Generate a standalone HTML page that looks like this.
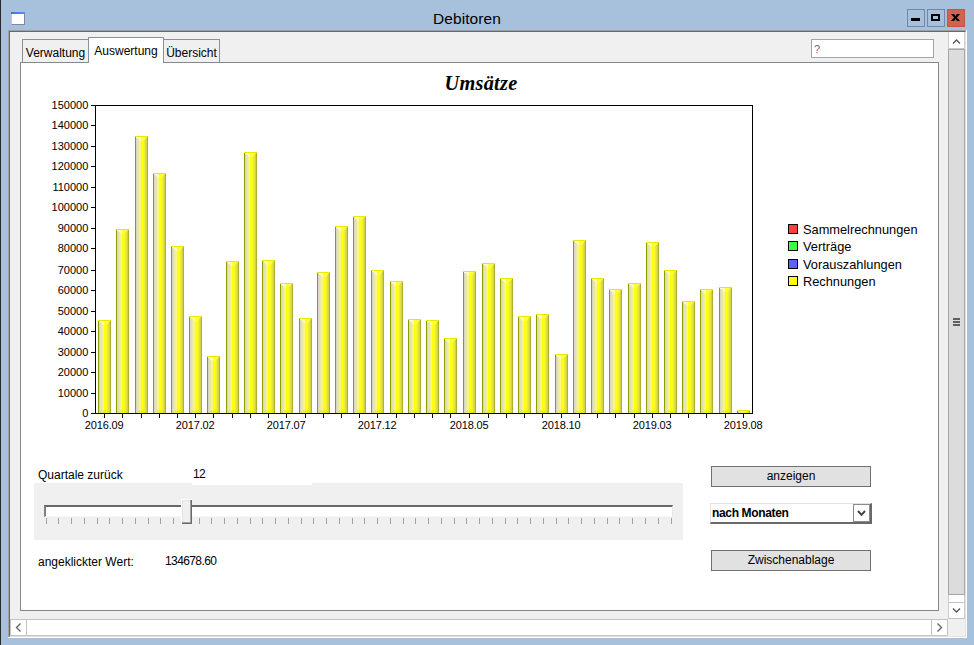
<!DOCTYPE html>
<html lang="de"><head><meta charset="utf-8"><title>Debitoren</title>
<style>
html,body{margin:0;padding:0}
body{width:974px;height:645px;overflow:hidden;background:#a7c1dc;position:relative;font-family:"Liberation Sans",Arial,sans-serif;font-size:12px;color:#000}
.abs{position:absolute;box-sizing:border-box}
#edge{left:0;top:0;width:1px;height:645px;background:#2b2927}
#edge2{left:1px;top:0;width:1px;height:645px;background:#adc9e6}
#icon{left:11px;top:12px;width:14px;height:13px;background:#fffffa;border:1px solid #8484a8;border-left-color:#c8c0e2;border-top:none}
#icon i{position:absolute;left:-1px;top:0;width:14px;height:2px;background:linear-gradient(90deg,#3f6edb,#5a92ea)}
#title{left:367px;top:9px;width:200px;text-align:center;font-size:15.5px;letter-spacing:0.1px;line-height:20px;color:#000}
.wbtn{top:9px;width:18px;height:18px;border:1px solid #7386a3}
#bmin{left:907px}#bmax{left:927px}#bclose{left:947px;background:#d06450;border-color:#c4553f}
#client{left:8px;top:30px;width:959px;height:608px;background:#a0a0a0}
#client2{left:9px;top:31px;width:957px;height:606px;background:#f0f0f0;border-left:1px solid #696969;border-top:1px solid #696969;border-right:1px solid #e3e3e3;border-bottom:1px solid #e3e3e3}
#client3{left:10px;top:32px;width:955px;height:604px;border-left:1px solid #f8f8f8;border-top:1px solid #f8f8f8}
#clientr{left:966px;top:30px;width:1px;height:608px;background:#fff}
#clientb{left:8px;top:637px;width:959px;height:1px;background:#fff}
.tab{border:1px solid #8a8f9c;border-bottom:none;background:#f0f0f0;font-size:12px;text-align:center;white-space:nowrap}
#t1{left:22px;top:39px;width:67px;height:23px;line-height:27px}
#t3{left:163px;top:39px;width:57px;height:23px;line-height:27px}
#t2{left:88px;top:37px;width:76px;height:26px;background:#fff;line-height:26px;z-index:3}
#panel{left:20px;top:62px;width:919px;height:549px;background:#fff;border:1px solid #828790}
#q{left:811px;top:39px;width:123px;height:19px;background:#fff;border:1px solid #a2a4ac;color:#6d6d6d;font-size:11px;line-height:18px;padding-left:2px}
#vs{left:948px;top:32px;width:17px;height:587px;background:#fff}
#vth{left:948px;top:49px;width:17px;height:546px;background:#dcdcdc;border:1px solid #a6a6a6}
#hs{left:10px;top:619px;width:938px;height:17px;background:#fff;border:1px solid #c3c3c3}
.lbl{font-size:12px;white-space:nowrap;line-height:14px}
#sl{left:34px;top:483px;width:649px;height:57px;background:#f0f0f0}
#lbl12bg{left:192px;top:465px;width:120px;height:20px;background:#fff}
#track{left:44px;top:505px;width:629px;height:12px;background:#fff;border-left:2px solid #808080;border-top:2px solid #696969;border-right:1px solid #e8e8e8;border-bottom:1px solid #f4f4f4}
#thumb{left:181px;top:499px;width:11px;height:25px;background:#696969;border-left:1px solid #fff;border-top:1px solid #fff}
#thumb i{position:absolute;left:0;top:0;width:9px;height:23px;background:#a0a0a0}
#thumb b{position:absolute;left:0;top:0;width:8px;height:22px;background:#f0f0f0;border-left:1px solid #e3e3e3;border-top:1px solid #e3e3e3;box-sizing:border-box}
.btn{background:#e1e1e1;border:1px solid #707070;font-size:12px;text-align:center;line-height:18px}
#combo{left:710px;top:503px;width:162px;height:21px;background:#fff;border-left:1px solid #e3e3e3;border-top:1px solid #e3e3e3;border-right:2px solid #696969;border-bottom:2px solid #696969;font-size:12px;font-weight:bold;letter-spacing:-0.35px;line-height:18px;padding-left:1px}
#cbtn{left:853px;top:504px;width:17px;height:18px;background:#fff;border:1px solid #8a8a8a}
</style></head><body>
<div class="abs" id="edge"></div>
<div class="abs" id="icon"><i></i></div>
<div class="abs" id="title">Debitoren</div>
<div class="abs wbtn" id="bmin"><svg width="16" height="16" style="position:absolute;left:0;top:0"><rect x="3" y="8" width="9" height="3" fill="#000"/></svg></div>
<div class="abs wbtn" id="bmax"><svg width="16" height="16" style="position:absolute;left:0;top:0"><rect x="4" y="5" width="7" height="5" fill="none" stroke="#000" stroke-width="2"/></svg></div>
<div class="abs wbtn" id="bclose"><svg width="16" height="16" style="position:absolute;left:0;top:0"><path d="M3 4h3l1.5 2.1L9 4h3L8.9 7.5 12 11H9L7.5 8.9 6 11H3L6.1 7.5Z" fill="#000"/></svg></div>
<div class="abs" id="client"></div><div class="abs" id="client2"></div><div class="abs" id="clientr"></div><div class="abs" id="clientb"></div>
<div class="abs" id="panel"></div>
<div class="abs tab" id="t1">Verwaltung</div>
<div class="abs tab" id="t3">Übersicht</div>
<div class="abs tab" id="t2">Auswertung</div>
<div class="abs" id="q">?</div>
<div class="abs" id="vs"></div>
<div class="abs" id="vth"></div>
<svg class="abs" style="left:948px;top:32px" width="17" height="587" shape-rendering="crispEdges"><rect x="0" y="0" width="1" height="17" fill="#d0d0d0"/><rect x="16" y="0" width="1" height="17" fill="#d0d0d0"/><rect x="0" y="16" width="17" height="1" fill="#c8c8c8"/><path d="M5 11.5L8.5 8L12 11.5" stroke="#555" stroke-width="1.3" fill="none" shape-rendering="auto"/><path d="M5 576.5L8.5 580L12 576.5" stroke="#555" stroke-width="1.3" fill="none" shape-rendering="auto"/><rect x="5" y="286" width="7" height="2" fill="#606060"/><rect x="5" y="289" width="7" height="2" fill="#606060"/><rect x="5" y="292" width="7" height="2" fill="#606060"/><rect x="0" y="563" width="1" height="24" fill="#cdcdcd"/><rect x="16" y="563" width="1" height="24" fill="#cdcdcd"/><rect x="0" y="570" width="17" height="1" fill="#c3c3c3"/><rect x="0" y="586" width="17" height="1" fill="#c3c3c3"/></svg>
<div class="abs" id="hs"></div>
<svg class="abs" style="left:10px;top:619px" width="938" height="17"><rect x="16" y="0" width="1" height="17" fill="#c3c3c3"/><rect x="921" y="0" width="1" height="17" fill="#c3c3c3"/><path d="M10.5 4.5L6.5 8.5L10.5 12.5" stroke="#606060" stroke-width="1.3" fill="none"/><path d="M927.5 4.5L931.5 8.5L927.5 12.5" stroke="#606060" stroke-width="1.3" fill="none"/></svg>
<div class="abs" id="sl"></div>
<div class="abs" id="lbl12bg"></div>
<div class="abs" id="track"></div>
<svg class="abs" style="left:0;top:0" width="974" height="645"><g shape-rendering="crispEdges" fill="#a0a0a0"><rect x="46" y="518" width="1" height="6"/><rect x="58" y="518" width="1" height="6"/><rect x="71" y="518" width="1" height="6"/><rect x="84" y="518" width="1" height="6"/><rect x="97" y="518" width="1" height="6"/><rect x="109" y="518" width="1" height="6"/><rect x="122" y="518" width="1" height="6"/><rect x="135" y="518" width="1" height="6"/><rect x="148" y="518" width="1" height="6"/><rect x="160" y="518" width="1" height="6"/><rect x="173" y="518" width="1" height="6"/><rect x="186" y="518" width="1" height="6"/><rect x="199" y="518" width="1" height="6"/><rect x="211" y="518" width="1" height="6"/><rect x="224" y="518" width="1" height="6"/><rect x="237" y="518" width="1" height="6"/><rect x="250" y="518" width="1" height="6"/><rect x="262" y="518" width="1" height="6"/><rect x="275" y="518" width="1" height="6"/><rect x="288" y="518" width="1" height="6"/><rect x="301" y="518" width="1" height="6"/><rect x="313" y="518" width="1" height="6"/><rect x="326" y="518" width="1" height="6"/><rect x="339" y="518" width="1" height="6"/><rect x="352" y="518" width="1" height="6"/><rect x="364" y="518" width="1" height="6"/><rect x="377" y="518" width="1" height="6"/><rect x="390" y="518" width="1" height="6"/><rect x="403" y="518" width="1" height="6"/><rect x="415" y="518" width="1" height="6"/><rect x="428" y="518" width="1" height="6"/><rect x="441" y="518" width="1" height="6"/><rect x="454" y="518" width="1" height="6"/><rect x="466" y="518" width="1" height="6"/><rect x="479" y="518" width="1" height="6"/><rect x="492" y="518" width="1" height="6"/><rect x="505" y="518" width="1" height="6"/><rect x="517" y="518" width="1" height="6"/><rect x="530" y="518" width="1" height="6"/><rect x="543" y="518" width="1" height="6"/><rect x="556" y="518" width="1" height="6"/><rect x="568" y="518" width="1" height="6"/><rect x="581" y="518" width="1" height="6"/><rect x="594" y="518" width="1" height="6"/><rect x="607" y="518" width="1" height="6"/><rect x="619" y="518" width="1" height="6"/><rect x="632" y="518" width="1" height="6"/><rect x="645" y="518" width="1" height="6"/><rect x="658" y="518" width="1" height="6"/><rect x="671" y="518" width="1" height="6"/></g></svg>
<div class="abs" id="thumb"><i></i><b></b></div>
<div class="abs lbl" style="left:38px;top:468px">Quartale zurück</div>
<div class="abs lbl" style="left:193px;top:467px;letter-spacing:-0.7px">12</div>
<div class="abs lbl" style="left:38px;top:555px">angeklickter Wert:</div>
<div class="abs lbl" style="left:165px;top:554px;letter-spacing:-0.6px">134678.60</div>
<div class="abs btn" style="left:711px;top:466px;width:160px;height:21px">anzeigen</div>
<div class="abs btn" style="left:711px;top:550px;width:160px;height:21px">Zwischenablage</div>
<div class="abs" id="combo">nach Monaten</div>
<div class="abs" id="cbtn"><svg width="15" height="16" style="position:absolute;left:0;top:0"><path d="M4 6L7.5 9.8L11 6" stroke="#404040" stroke-width="1.9" fill="none"/></svg></div>
<svg id="chart" width="974" height="645" viewBox="0 0 974 645" style="position:absolute;left:0;top:0">
<defs>
<linearGradient id="cyl" x1="0" y1="0" x2="1" y2="0">
<stop offset="0" stop-color="#989800"/><stop offset="0.077" stop-color="#989800"/>
<stop offset="0.077" stop-color="#d4d4c8"/><stop offset="0.2" stop-color="#e2e2b2"/><stop offset="0.33" stop-color="#f0f09a"/>
<stop offset="0.45" stop-color="#fafa84"/><stop offset="0.46" stop-color="#ffff00"/>
<stop offset="0.62" stop-color="#ffff14"/><stop offset="0.77" stop-color="#e8e83c"/>
<stop offset="0.923" stop-color="#cccc48"/><stop offset="0.923" stop-color="#b0b034"/>
<stop offset="1" stop-color="#b0b034"/>
</linearGradient>
</defs>
<g shape-rendering="crispEdges">
<rect x="98" y="320" width="13" height="93" fill="url(#cyl)"/>
<rect x="98" y="320" width="13" height="1" fill="#e8e800"/>
<path d="M99 321h5v4.5z" fill="#ffffa8" shape-rendering="auto"/>
<path d="M99 321h2.5l-2.5 0z M99 321h3l-1.5 1.2z" fill="#ffffff" shape-rendering="auto"/>
<path d="M104 321h6l-4 4h-2z" fill="#ffff38" shape-rendering="auto"/>
<path d="M99 413h11l-3-3h-5z" fill="#d8d800" fill-opacity="0.3" shape-rendering="auto"/>
<rect x="116" y="229" width="13" height="184" fill="url(#cyl)"/>
<rect x="116" y="229" width="13" height="1" fill="#e8e800"/>
<path d="M117 230h5v4.5z" fill="#ffffa8" shape-rendering="auto"/>
<path d="M117 230h2.5l-2.5 0z M117 230h3l-1.5 1.2z" fill="#ffffff" shape-rendering="auto"/>
<path d="M122 230h6l-4 4h-2z" fill="#ffff38" shape-rendering="auto"/>
<path d="M117 413h11l-3-3h-5z" fill="#d8d800" fill-opacity="0.3" shape-rendering="auto"/>
<rect x="135" y="136" width="13" height="277" fill="url(#cyl)"/>
<rect x="135" y="136" width="13" height="1" fill="#e8e800"/>
<path d="M136 137h5v4.5z" fill="#ffffa8" shape-rendering="auto"/>
<path d="M136 137h2.5l-2.5 0z M136 137h3l-1.5 1.2z" fill="#ffffff" shape-rendering="auto"/>
<path d="M141 137h6l-4 4h-2z" fill="#ffff38" shape-rendering="auto"/>
<path d="M136 413h11l-3-3h-5z" fill="#d8d800" fill-opacity="0.3" shape-rendering="auto"/>
<rect x="153" y="173" width="13" height="240" fill="url(#cyl)"/>
<rect x="153" y="173" width="13" height="1" fill="#e8e800"/>
<path d="M154 174h5v4.5z" fill="#ffffa8" shape-rendering="auto"/>
<path d="M154 174h2.5l-2.5 0z M154 174h3l-1.5 1.2z" fill="#ffffff" shape-rendering="auto"/>
<path d="M159 174h6l-4 4h-2z" fill="#ffff38" shape-rendering="auto"/>
<path d="M154 413h11l-3-3h-5z" fill="#d8d800" fill-opacity="0.3" shape-rendering="auto"/>
<rect x="171" y="246" width="13" height="167" fill="url(#cyl)"/>
<rect x="171" y="246" width="13" height="1" fill="#e8e800"/>
<path d="M172 247h5v4.5z" fill="#ffffa8" shape-rendering="auto"/>
<path d="M172 247h2.5l-2.5 0z M172 247h3l-1.5 1.2z" fill="#ffffff" shape-rendering="auto"/>
<path d="M177 247h6l-4 4h-2z" fill="#ffff38" shape-rendering="auto"/>
<path d="M172 413h11l-3-3h-5z" fill="#d8d800" fill-opacity="0.3" shape-rendering="auto"/>
<rect x="189" y="316" width="13" height="97" fill="url(#cyl)"/>
<rect x="189" y="316" width="13" height="1" fill="#e8e800"/>
<path d="M190 317h5v4.5z" fill="#ffffa8" shape-rendering="auto"/>
<path d="M190 317h2.5l-2.5 0z M190 317h3l-1.5 1.2z" fill="#ffffff" shape-rendering="auto"/>
<path d="M195 317h6l-4 4h-2z" fill="#ffff38" shape-rendering="auto"/>
<path d="M190 413h11l-3-3h-5z" fill="#d8d800" fill-opacity="0.3" shape-rendering="auto"/>
<rect x="207" y="356" width="13" height="57" fill="url(#cyl)"/>
<rect x="207" y="356" width="13" height="1" fill="#e8e800"/>
<path d="M208 357h5v4.5z" fill="#ffffa8" shape-rendering="auto"/>
<path d="M208 357h2.5l-2.5 0z M208 357h3l-1.5 1.2z" fill="#ffffff" shape-rendering="auto"/>
<path d="M213 357h6l-4 4h-2z" fill="#ffff38" shape-rendering="auto"/>
<path d="M208 413h11l-3-3h-5z" fill="#d8d800" fill-opacity="0.3" shape-rendering="auto"/>
<rect x="226" y="261" width="13" height="152" fill="url(#cyl)"/>
<rect x="226" y="261" width="13" height="1" fill="#e8e800"/>
<path d="M227 262h5v4.5z" fill="#ffffa8" shape-rendering="auto"/>
<path d="M227 262h2.5l-2.5 0z M227 262h3l-1.5 1.2z" fill="#ffffff" shape-rendering="auto"/>
<path d="M232 262h6l-4 4h-2z" fill="#ffff38" shape-rendering="auto"/>
<path d="M227 413h11l-3-3h-5z" fill="#d8d800" fill-opacity="0.3" shape-rendering="auto"/>
<rect x="244" y="152" width="13" height="261" fill="url(#cyl)"/>
<rect x="244" y="152" width="13" height="1" fill="#e8e800"/>
<path d="M245 153h5v4.5z" fill="#ffffa8" shape-rendering="auto"/>
<path d="M245 153h2.5l-2.5 0z M245 153h3l-1.5 1.2z" fill="#ffffff" shape-rendering="auto"/>
<path d="M250 153h6l-4 4h-2z" fill="#ffff38" shape-rendering="auto"/>
<path d="M245 413h11l-3-3h-5z" fill="#d8d800" fill-opacity="0.3" shape-rendering="auto"/>
<rect x="262" y="260" width="13" height="153" fill="url(#cyl)"/>
<rect x="262" y="260" width="13" height="1" fill="#e8e800"/>
<path d="M263 261h5v4.5z" fill="#ffffa8" shape-rendering="auto"/>
<path d="M263 261h2.5l-2.5 0z M263 261h3l-1.5 1.2z" fill="#ffffff" shape-rendering="auto"/>
<path d="M268 261h6l-4 4h-2z" fill="#ffff38" shape-rendering="auto"/>
<path d="M263 413h11l-3-3h-5z" fill="#d8d800" fill-opacity="0.3" shape-rendering="auto"/>
<rect x="280" y="283" width="13" height="130" fill="url(#cyl)"/>
<rect x="280" y="283" width="13" height="1" fill="#e8e800"/>
<path d="M281 284h5v4.5z" fill="#ffffa8" shape-rendering="auto"/>
<path d="M281 284h2.5l-2.5 0z M281 284h3l-1.5 1.2z" fill="#ffffff" shape-rendering="auto"/>
<path d="M286 284h6l-4 4h-2z" fill="#ffff38" shape-rendering="auto"/>
<path d="M281 413h11l-3-3h-5z" fill="#d8d800" fill-opacity="0.3" shape-rendering="auto"/>
<rect x="299" y="318" width="13" height="95" fill="url(#cyl)"/>
<rect x="299" y="318" width="13" height="1" fill="#e8e800"/>
<path d="M300 319h5v4.5z" fill="#ffffa8" shape-rendering="auto"/>
<path d="M300 319h2.5l-2.5 0z M300 319h3l-1.5 1.2z" fill="#ffffff" shape-rendering="auto"/>
<path d="M305 319h6l-4 4h-2z" fill="#ffff38" shape-rendering="auto"/>
<path d="M300 413h11l-3-3h-5z" fill="#d8d800" fill-opacity="0.3" shape-rendering="auto"/>
<rect x="317" y="272" width="13" height="141" fill="url(#cyl)"/>
<rect x="317" y="272" width="13" height="1" fill="#e8e800"/>
<path d="M318 273h5v4.5z" fill="#ffffa8" shape-rendering="auto"/>
<path d="M318 273h2.5l-2.5 0z M318 273h3l-1.5 1.2z" fill="#ffffff" shape-rendering="auto"/>
<path d="M323 273h6l-4 4h-2z" fill="#ffff38" shape-rendering="auto"/>
<path d="M318 413h11l-3-3h-5z" fill="#d8d800" fill-opacity="0.3" shape-rendering="auto"/>
<rect x="335" y="226" width="13" height="187" fill="url(#cyl)"/>
<rect x="335" y="226" width="13" height="1" fill="#e8e800"/>
<path d="M336 227h5v4.5z" fill="#ffffa8" shape-rendering="auto"/>
<path d="M336 227h2.5l-2.5 0z M336 227h3l-1.5 1.2z" fill="#ffffff" shape-rendering="auto"/>
<path d="M341 227h6l-4 4h-2z" fill="#ffff38" shape-rendering="auto"/>
<path d="M336 413h11l-3-3h-5z" fill="#d8d800" fill-opacity="0.3" shape-rendering="auto"/>
<rect x="353" y="216" width="13" height="197" fill="url(#cyl)"/>
<rect x="353" y="216" width="13" height="1" fill="#e8e800"/>
<path d="M354 217h5v4.5z" fill="#ffffa8" shape-rendering="auto"/>
<path d="M354 217h2.5l-2.5 0z M354 217h3l-1.5 1.2z" fill="#ffffff" shape-rendering="auto"/>
<path d="M359 217h6l-4 4h-2z" fill="#ffff38" shape-rendering="auto"/>
<path d="M354 413h11l-3-3h-5z" fill="#d8d800" fill-opacity="0.3" shape-rendering="auto"/>
<rect x="371" y="270" width="13" height="143" fill="url(#cyl)"/>
<rect x="371" y="270" width="13" height="1" fill="#e8e800"/>
<path d="M372 271h5v4.5z" fill="#ffffa8" shape-rendering="auto"/>
<path d="M372 271h2.5l-2.5 0z M372 271h3l-1.5 1.2z" fill="#ffffff" shape-rendering="auto"/>
<path d="M377 271h6l-4 4h-2z" fill="#ffff38" shape-rendering="auto"/>
<path d="M372 413h11l-3-3h-5z" fill="#d8d800" fill-opacity="0.3" shape-rendering="auto"/>
<rect x="390" y="281" width="13" height="132" fill="url(#cyl)"/>
<rect x="390" y="281" width="13" height="1" fill="#e8e800"/>
<path d="M391 282h5v4.5z" fill="#ffffa8" shape-rendering="auto"/>
<path d="M391 282h2.5l-2.5 0z M391 282h3l-1.5 1.2z" fill="#ffffff" shape-rendering="auto"/>
<path d="M396 282h6l-4 4h-2z" fill="#ffff38" shape-rendering="auto"/>
<path d="M391 413h11l-3-3h-5z" fill="#d8d800" fill-opacity="0.3" shape-rendering="auto"/>
<rect x="408" y="319" width="13" height="94" fill="url(#cyl)"/>
<rect x="408" y="319" width="13" height="1" fill="#e8e800"/>
<path d="M409 320h5v4.5z" fill="#ffffa8" shape-rendering="auto"/>
<path d="M409 320h2.5l-2.5 0z M409 320h3l-1.5 1.2z" fill="#ffffff" shape-rendering="auto"/>
<path d="M414 320h6l-4 4h-2z" fill="#ffff38" shape-rendering="auto"/>
<path d="M409 413h11l-3-3h-5z" fill="#d8d800" fill-opacity="0.3" shape-rendering="auto"/>
<rect x="426" y="320" width="13" height="93" fill="url(#cyl)"/>
<rect x="426" y="320" width="13" height="1" fill="#e8e800"/>
<path d="M427 321h5v4.5z" fill="#ffffa8" shape-rendering="auto"/>
<path d="M427 321h2.5l-2.5 0z M427 321h3l-1.5 1.2z" fill="#ffffff" shape-rendering="auto"/>
<path d="M432 321h6l-4 4h-2z" fill="#ffff38" shape-rendering="auto"/>
<path d="M427 413h11l-3-3h-5z" fill="#d8d800" fill-opacity="0.3" shape-rendering="auto"/>
<rect x="444" y="338" width="13" height="75" fill="url(#cyl)"/>
<rect x="444" y="338" width="13" height="1" fill="#e8e800"/>
<path d="M445 339h5v4.5z" fill="#ffffa8" shape-rendering="auto"/>
<path d="M445 339h2.5l-2.5 0z M445 339h3l-1.5 1.2z" fill="#ffffff" shape-rendering="auto"/>
<path d="M450 339h6l-4 4h-2z" fill="#ffff38" shape-rendering="auto"/>
<path d="M445 413h11l-3-3h-5z" fill="#d8d800" fill-opacity="0.3" shape-rendering="auto"/>
<rect x="463" y="271" width="13" height="142" fill="url(#cyl)"/>
<rect x="463" y="271" width="13" height="1" fill="#e8e800"/>
<path d="M464 272h5v4.5z" fill="#ffffa8" shape-rendering="auto"/>
<path d="M464 272h2.5l-2.5 0z M464 272h3l-1.5 1.2z" fill="#ffffff" shape-rendering="auto"/>
<path d="M469 272h6l-4 4h-2z" fill="#ffff38" shape-rendering="auto"/>
<path d="M464 413h11l-3-3h-5z" fill="#d8d800" fill-opacity="0.3" shape-rendering="auto"/>
<rect x="482" y="263" width="13" height="150" fill="url(#cyl)"/>
<rect x="482" y="263" width="13" height="1" fill="#e8e800"/>
<path d="M483 264h5v4.5z" fill="#ffffa8" shape-rendering="auto"/>
<path d="M483 264h2.5l-2.5 0z M483 264h3l-1.5 1.2z" fill="#ffffff" shape-rendering="auto"/>
<path d="M488 264h6l-4 4h-2z" fill="#ffff38" shape-rendering="auto"/>
<path d="M483 413h11l-3-3h-5z" fill="#d8d800" fill-opacity="0.3" shape-rendering="auto"/>
<rect x="500" y="278" width="13" height="135" fill="url(#cyl)"/>
<rect x="500" y="278" width="13" height="1" fill="#e8e800"/>
<path d="M501 279h5v4.5z" fill="#ffffa8" shape-rendering="auto"/>
<path d="M501 279h2.5l-2.5 0z M501 279h3l-1.5 1.2z" fill="#ffffff" shape-rendering="auto"/>
<path d="M506 279h6l-4 4h-2z" fill="#ffff38" shape-rendering="auto"/>
<path d="M501 413h11l-3-3h-5z" fill="#d8d800" fill-opacity="0.3" shape-rendering="auto"/>
<rect x="518" y="316" width="13" height="97" fill="url(#cyl)"/>
<rect x="518" y="316" width="13" height="1" fill="#e8e800"/>
<path d="M519 317h5v4.5z" fill="#ffffa8" shape-rendering="auto"/>
<path d="M519 317h2.5l-2.5 0z M519 317h3l-1.5 1.2z" fill="#ffffff" shape-rendering="auto"/>
<path d="M524 317h6l-4 4h-2z" fill="#ffff38" shape-rendering="auto"/>
<path d="M519 413h11l-3-3h-5z" fill="#d8d800" fill-opacity="0.3" shape-rendering="auto"/>
<rect x="536" y="314" width="13" height="99" fill="url(#cyl)"/>
<rect x="536" y="314" width="13" height="1" fill="#e8e800"/>
<path d="M537 315h5v4.5z" fill="#ffffa8" shape-rendering="auto"/>
<path d="M537 315h2.5l-2.5 0z M537 315h3l-1.5 1.2z" fill="#ffffff" shape-rendering="auto"/>
<path d="M542 315h6l-4 4h-2z" fill="#ffff38" shape-rendering="auto"/>
<path d="M537 413h11l-3-3h-5z" fill="#d8d800" fill-opacity="0.3" shape-rendering="auto"/>
<rect x="555" y="354" width="13" height="59" fill="url(#cyl)"/>
<rect x="555" y="354" width="13" height="1" fill="#e8e800"/>
<path d="M556 355h5v4.5z" fill="#ffffa8" shape-rendering="auto"/>
<path d="M556 355h2.5l-2.5 0z M556 355h3l-1.5 1.2z" fill="#ffffff" shape-rendering="auto"/>
<path d="M561 355h6l-4 4h-2z" fill="#ffff38" shape-rendering="auto"/>
<path d="M556 413h11l-3-3h-5z" fill="#d8d800" fill-opacity="0.3" shape-rendering="auto"/>
<rect x="573" y="240" width="13" height="173" fill="url(#cyl)"/>
<rect x="573" y="240" width="13" height="1" fill="#e8e800"/>
<path d="M574 241h5v4.5z" fill="#ffffa8" shape-rendering="auto"/>
<path d="M574 241h2.5l-2.5 0z M574 241h3l-1.5 1.2z" fill="#ffffff" shape-rendering="auto"/>
<path d="M579 241h6l-4 4h-2z" fill="#ffff38" shape-rendering="auto"/>
<path d="M574 413h11l-3-3h-5z" fill="#d8d800" fill-opacity="0.3" shape-rendering="auto"/>
<rect x="591" y="278" width="13" height="135" fill="url(#cyl)"/>
<rect x="591" y="278" width="13" height="1" fill="#e8e800"/>
<path d="M592 279h5v4.5z" fill="#ffffa8" shape-rendering="auto"/>
<path d="M592 279h2.5l-2.5 0z M592 279h3l-1.5 1.2z" fill="#ffffff" shape-rendering="auto"/>
<path d="M597 279h6l-4 4h-2z" fill="#ffff38" shape-rendering="auto"/>
<path d="M592 413h11l-3-3h-5z" fill="#d8d800" fill-opacity="0.3" shape-rendering="auto"/>
<rect x="609" y="289" width="13" height="124" fill="url(#cyl)"/>
<rect x="609" y="289" width="13" height="1" fill="#e8e800"/>
<path d="M610 290h5v4.5z" fill="#ffffa8" shape-rendering="auto"/>
<path d="M610 290h2.5l-2.5 0z M610 290h3l-1.5 1.2z" fill="#ffffff" shape-rendering="auto"/>
<path d="M615 290h6l-4 4h-2z" fill="#ffff38" shape-rendering="auto"/>
<path d="M610 413h11l-3-3h-5z" fill="#d8d800" fill-opacity="0.3" shape-rendering="auto"/>
<rect x="628" y="283" width="13" height="130" fill="url(#cyl)"/>
<rect x="628" y="283" width="13" height="1" fill="#e8e800"/>
<path d="M629 284h5v4.5z" fill="#ffffa8" shape-rendering="auto"/>
<path d="M629 284h2.5l-2.5 0z M629 284h3l-1.5 1.2z" fill="#ffffff" shape-rendering="auto"/>
<path d="M634 284h6l-4 4h-2z" fill="#ffff38" shape-rendering="auto"/>
<path d="M629 413h11l-3-3h-5z" fill="#d8d800" fill-opacity="0.3" shape-rendering="auto"/>
<rect x="646" y="242" width="13" height="171" fill="url(#cyl)"/>
<rect x="646" y="242" width="13" height="1" fill="#e8e800"/>
<path d="M647 243h5v4.5z" fill="#ffffa8" shape-rendering="auto"/>
<path d="M647 243h2.5l-2.5 0z M647 243h3l-1.5 1.2z" fill="#ffffff" shape-rendering="auto"/>
<path d="M652 243h6l-4 4h-2z" fill="#ffff38" shape-rendering="auto"/>
<path d="M647 413h11l-3-3h-5z" fill="#d8d800" fill-opacity="0.3" shape-rendering="auto"/>
<rect x="664" y="270" width="13" height="143" fill="url(#cyl)"/>
<rect x="664" y="270" width="13" height="1" fill="#e8e800"/>
<path d="M665 271h5v4.5z" fill="#ffffa8" shape-rendering="auto"/>
<path d="M665 271h2.5l-2.5 0z M665 271h3l-1.5 1.2z" fill="#ffffff" shape-rendering="auto"/>
<path d="M670 271h6l-4 4h-2z" fill="#ffff38" shape-rendering="auto"/>
<path d="M665 413h11l-3-3h-5z" fill="#d8d800" fill-opacity="0.3" shape-rendering="auto"/>
<rect x="682" y="301" width="13" height="112" fill="url(#cyl)"/>
<rect x="682" y="301" width="13" height="1" fill="#e8e800"/>
<path d="M683 302h5v4.5z" fill="#ffffa8" shape-rendering="auto"/>
<path d="M683 302h2.5l-2.5 0z M683 302h3l-1.5 1.2z" fill="#ffffff" shape-rendering="auto"/>
<path d="M688 302h6l-4 4h-2z" fill="#ffff38" shape-rendering="auto"/>
<path d="M683 413h11l-3-3h-5z" fill="#d8d800" fill-opacity="0.3" shape-rendering="auto"/>
<rect x="700" y="289" width="13" height="124" fill="url(#cyl)"/>
<rect x="700" y="289" width="13" height="1" fill="#e8e800"/>
<path d="M701 290h5v4.5z" fill="#ffffa8" shape-rendering="auto"/>
<path d="M701 290h2.5l-2.5 0z M701 290h3l-1.5 1.2z" fill="#ffffff" shape-rendering="auto"/>
<path d="M706 290h6l-4 4h-2z" fill="#ffff38" shape-rendering="auto"/>
<path d="M701 413h11l-3-3h-5z" fill="#d8d800" fill-opacity="0.3" shape-rendering="auto"/>
<rect x="719" y="287" width="13" height="126" fill="url(#cyl)"/>
<rect x="719" y="287" width="13" height="1" fill="#e8e800"/>
<path d="M720 288h5v4.5z" fill="#ffffa8" shape-rendering="auto"/>
<path d="M720 288h2.5l-2.5 0z M720 288h3l-1.5 1.2z" fill="#ffffff" shape-rendering="auto"/>
<path d="M725 288h6l-4 4h-2z" fill="#ffff38" shape-rendering="auto"/>
<path d="M720 413h11l-3-3h-5z" fill="#d8d800" fill-opacity="0.3" shape-rendering="auto"/>
<rect x="737" y="410" width="13" height="3" fill="url(#cyl)"/>
<rect x="737" y="410" width="13" height="1" fill="#e8e800"/>
<path d="M95.5 105.5H752.5V413.5H95.5Z" fill="none" stroke="#000" stroke-width="1"/>
<rect x="91" y="413" width="4" height="1" fill="#000"/>
<rect x="91" y="393" width="4" height="1" fill="#000"/>
<rect x="91" y="372" width="4" height="1" fill="#000"/>
<rect x="91" y="352" width="4" height="1" fill="#000"/>
<rect x="91" y="331" width="4" height="1" fill="#000"/>
<rect x="91" y="311" width="4" height="1" fill="#000"/>
<rect x="91" y="290" width="4" height="1" fill="#000"/>
<rect x="91" y="270" width="4" height="1" fill="#000"/>
<rect x="91" y="248" width="4" height="1" fill="#000"/>
<rect x="91" y="228" width="4" height="1" fill="#000"/>
<rect x="91" y="207" width="4" height="1" fill="#000"/>
<rect x="91" y="187" width="4" height="1" fill="#000"/>
<rect x="91" y="166" width="4" height="1" fill="#000"/>
<rect x="91" y="146" width="4" height="1" fill="#000"/>
<rect x="91" y="125" width="4" height="1" fill="#000"/>
<rect x="91" y="105" width="4" height="1" fill="#000"/>
<rect x="104" y="413" width="1" height="5" fill="#000"/>
<rect x="122" y="413" width="1" height="5" fill="#000"/>
<rect x="141" y="413" width="1" height="5" fill="#000"/>
<rect x="159" y="413" width="1" height="5" fill="#000"/>
<rect x="177" y="413" width="1" height="5" fill="#000"/>
<rect x="195" y="413" width="1" height="5" fill="#000"/>
<rect x="213" y="413" width="1" height="5" fill="#000"/>
<rect x="232" y="413" width="1" height="5" fill="#000"/>
<rect x="250" y="413" width="1" height="5" fill="#000"/>
<rect x="268" y="413" width="1" height="5" fill="#000"/>
<rect x="286" y="413" width="1" height="5" fill="#000"/>
<rect x="305" y="413" width="1" height="5" fill="#000"/>
<rect x="323" y="413" width="1" height="5" fill="#000"/>
<rect x="341" y="413" width="1" height="5" fill="#000"/>
<rect x="359" y="413" width="1" height="5" fill="#000"/>
<rect x="377" y="413" width="1" height="5" fill="#000"/>
<rect x="396" y="413" width="1" height="5" fill="#000"/>
<rect x="414" y="413" width="1" height="5" fill="#000"/>
<rect x="432" y="413" width="1" height="5" fill="#000"/>
<rect x="450" y="413" width="1" height="5" fill="#000"/>
<rect x="469" y="413" width="1" height="5" fill="#000"/>
<rect x="488" y="413" width="1" height="5" fill="#000"/>
<rect x="506" y="413" width="1" height="5" fill="#000"/>
<rect x="524" y="413" width="1" height="5" fill="#000"/>
<rect x="542" y="413" width="1" height="5" fill="#000"/>
<rect x="561" y="413" width="1" height="5" fill="#000"/>
<rect x="579" y="413" width="1" height="5" fill="#000"/>
<rect x="597" y="413" width="1" height="5" fill="#000"/>
<rect x="615" y="413" width="1" height="5" fill="#000"/>
<rect x="634" y="413" width="1" height="5" fill="#000"/>
<rect x="652" y="413" width="1" height="5" fill="#000"/>
<rect x="670" y="413" width="1" height="5" fill="#000"/>
<rect x="688" y="413" width="1" height="5" fill="#000"/>
<rect x="706" y="413" width="1" height="5" fill="#000"/>
<rect x="725" y="413" width="1" height="5" fill="#000"/>
<rect x="743" y="413" width="1" height="5" fill="#000"/>
</g>
<g font-family="Liberation Sans, Arial, sans-serif" font-size="11" fill="#000" text-anchor="end">
<text x="88.3" y="416.6">0</text>
<text x="88.3" y="396.6">10000</text>
<text x="88.3" y="375.6">20000</text>
<text x="88.3" y="355.6">30000</text>
<text x="88.3" y="334.6">40000</text>
<text x="88.3" y="314.6">50000</text>
<text x="88.3" y="293.6">60000</text>
<text x="88.3" y="273.6">70000</text>
<text x="88.3" y="251.6">80000</text>
<text x="88.3" y="231.6">90000</text>
<text x="88.3" y="210.6">100000</text>
<text x="88.3" y="190.6">110000</text>
<text x="88.3" y="169.6">120000</text>
<text x="88.3" y="149.6">130000</text>
<text x="88.3" y="128.6">140000</text>
<text x="88.3" y="108.6">150000</text>
</g>
<g font-family="Liberation Sans, Arial, sans-serif" font-size="11" fill="#000" text-anchor="middle">
<text x="104.2" y="429" letter-spacing="-0.15">2016.09</text>
<text x="195.2" y="429" letter-spacing="-0.15">2017.02</text>
<text x="286.2" y="429" letter-spacing="-0.15">2017.07</text>
<text x="377.2" y="429" letter-spacing="-0.15">2017.12</text>
<text x="469.2" y="429" letter-spacing="-0.15">2018.05</text>
<text x="561.2" y="429" letter-spacing="-0.15">2018.10</text>
<text x="652.2" y="429" letter-spacing="-0.15">2019.03</text>
<text x="743.2" y="429" letter-spacing="-0.15">2019.08</text>
</g>
<rect x="788.5" y="224.5" width="9" height="9" fill="#ff4040" stroke="#000" stroke-width="1" shape-rendering="crispEdges"/>
<text x="803" y="233.5" font-family="Liberation Sans, Arial, sans-serif" font-size="12.8" fill="#000">Sammelrechnungen</text>
<rect x="788.5" y="241.5" width="9" height="9" fill="#40ff40" stroke="#000" stroke-width="1" shape-rendering="crispEdges"/>
<text x="803" y="250.5" font-family="Liberation Sans, Arial, sans-serif" font-size="12.8" fill="#000">Verträge</text>
<rect x="788.5" y="259.5" width="9" height="9" fill="#6060ff" stroke="#000" stroke-width="1" shape-rendering="crispEdges"/>
<text x="803" y="268.5" font-family="Liberation Sans, Arial, sans-serif" font-size="12.8" fill="#000">Vorauszahlungen</text>
<rect x="788.5" y="276.5" width="9" height="9" fill="#ffff00" stroke="#000" stroke-width="1" shape-rendering="crispEdges"/>
<text x="803" y="285.5" font-family="Liberation Sans, Arial, sans-serif" font-size="12.8" fill="#000">Rechnungen</text>
<text x="481" y="89.5" text-anchor="middle" font-family="Liberation Serif, Times New Roman, serif" font-weight="bold" font-style="italic" font-size="20.3" letter-spacing="0.3" fill="#000">Umsätze</text>
</svg>
</body></html>
